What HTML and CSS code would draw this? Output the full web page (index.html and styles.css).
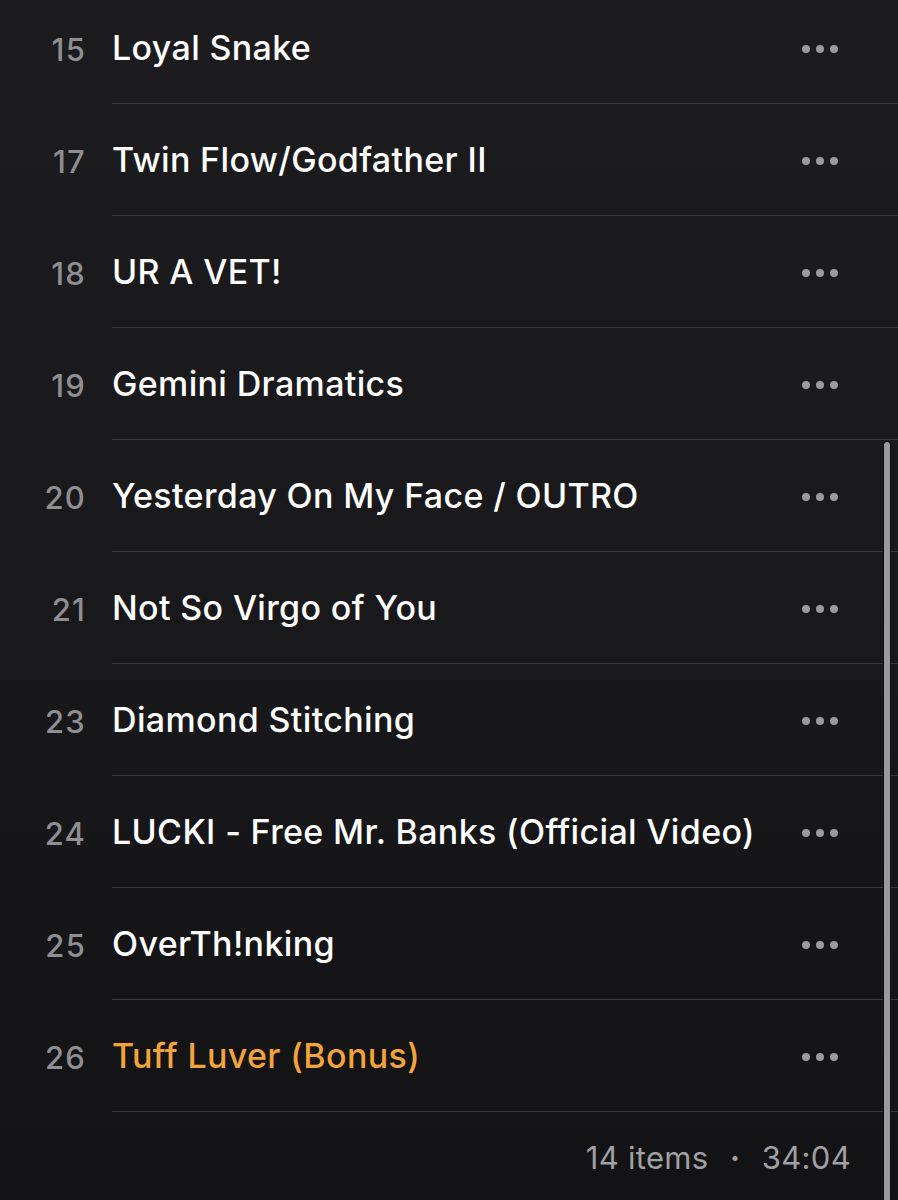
FILE: index.html
```html
<!DOCTYPE html>
<html>
<head>
<meta charset="utf-8">
<link rel="stylesheet" href="styles.css">
</head>
<body>
<div class="screen">
  <ul class="tracks">
    <li class="track"><span class="num">15</span><div class="main"><span class="title">Loyal Snake</span><span class="more"><i></i><i></i><i></i></span></div></li>
    <li class="track"><span class="num">17</span><div class="main"><span class="title">Twin Flow/Godfather II</span><span class="more"><i></i><i></i><i></i></span></div></li>
    <li class="track"><span class="num">18</span><div class="main"><span class="title">UR A VET!</span><span class="more"><i></i><i></i><i></i></span></div></li>
    <li class="track"><span class="num">19</span><div class="main"><span class="title">Gemini Dramatics</span><span class="more"><i></i><i></i><i></i></span></div></li>
    <li class="track"><span class="num">20</span><div class="main"><span class="title">Yesterday On My Face / OUTRO</span><span class="more"><i></i><i></i><i></i></span></div></li>
    <li class="track"><span class="num">21</span><div class="main"><span class="title">Not So Virgo of You</span><span class="more"><i></i><i></i><i></i></span></div></li>
    <li class="track"><span class="num">23</span><div class="main"><span class="title">Diamond Stitching</span><span class="more"><i></i><i></i><i></i></span></div></li>
    <li class="track"><span class="num">24</span><div class="main"><span class="title">LUCKI - Free Mr. Banks (Official Video)</span><span class="more"><i></i><i></i><i></i></span></div></li>
    <li class="track"><span class="num">25</span><div class="main"><span class="title">OverTh!nking</span><span class="more"><i></i><i></i><i></i></span></div></li>
    <li class="track playing"><span class="num">26</span><div class="main"><span class="title">Tuff Luver (Bonus)</span><span class="more"><i></i><i></i><i></i></span></div></li>
  </ul>
  <div class="footer"><span>14 items</span><span class="sep">•</span><span>34:04</span></div>
  <div class="scrollbar"></div>
</div>
</body>
</html>
```

FILE: styles.css
```css
html, body {
  margin: 0;
  padding: 0;
  background: #141416;
}
.screen {
  position: relative;
  width: 898px;
  height: 1200px;
  overflow: hidden;
  background: linear-gradient(to bottom, #1c1c1e 0%, #19191b 50%, #131315 100%);
  font-family: Inter, "Liberation Sans", sans-serif;
}
.tracks {
  list-style: none;
  margin: -8px 0 0 0;
  padding: 0;
}
.track {
  display: flex;
  align-items: stretch;
  height: 112px;
}
.num {
  width: 86px;
  flex: none;
  display: flex;
  align-items: center;
  justify-content: flex-end;
  color: #8e8e93;
  font-size: 31px;
  font-weight: 500;
  letter-spacing: 1.2px;
  padding-top: 2px;
}
.main {
  flex: 1;
  margin-left: 26px;
  display: flex;
  align-items: center;
  justify-content: space-between;
  border-bottom: 1px solid #38383b;
}
.title {
  color: #ffffff;
  font-size: 34px;
  font-weight: 500;
  letter-spacing: 0.35px;
}
.playing .title {
  color: #f2a43a;
}
.more {
  display: flex;
  gap: 6px;
  margin-right: 60px;
  padding-top: 2px;
}
.more i {
  width: 8px;
  height: 8px;
  border-radius: 50%;
  background: #9b9b9f;
}
.footer {
  display: flex;
  justify-content: flex-end;
  align-items: center;
  gap: 22px;
  height: 90px;
  padding-right: 47px;
  color: #a0a0a5;
  font-size: 31px;
  font-weight: 400;
  letter-spacing: 0.3px;
}
.footer .sep {
  font-size: 16px;
}
.scrollbar {
  position: absolute;
  left: 884px;
  top: 442px;
  width: 6px;
  bottom: 0;
  background: #9a9a9e;
  border-radius: 3px 3px 0 0;
  box-shadow: 0 0 0 1px #0e0e10;
}
```
